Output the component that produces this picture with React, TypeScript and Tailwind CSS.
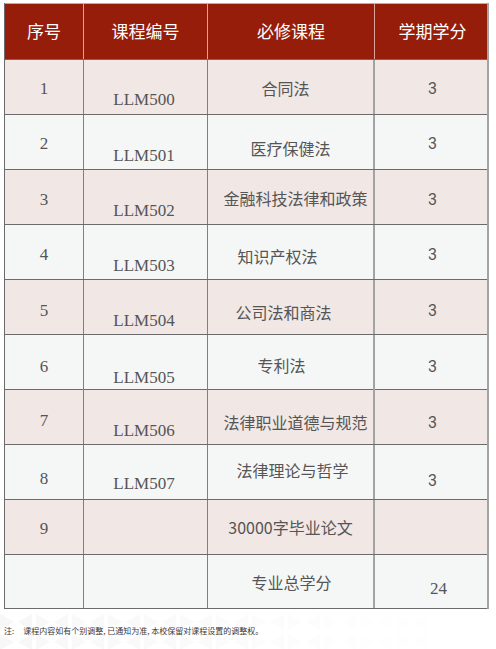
import { type ReactElement } from "react";

interface CourseRow {
  no: string;
  code: string;
  name: string;
  credit: string;
  bg: string;
  noCls: string;
  codeCls: string;
  nameCls: string;
  creditCls: string;
}

const PINK = "bg-[#f1e7e5]";
const GREY = "bg-[#f5f7f7]";

const rows: CourseRow[] = [
  { no: "1", code: "LLM500", name: "合同法", credit: "3", bg: PINK, noCls: "pt-[4px]", codeCls: "pt-[26px]", nameCls: "pt-[2px] pr-[10px]", creditCls: "pt-[4px]" },
  { no: "2", code: "LLM501", name: "医疗保健法", credit: "3", bg: GREY, noCls: "pt-[4px]", codeCls: "pt-[28px]", nameCls: "pt-[12px]", creditCls: "pt-[4px]" },
  { no: "3", code: "LLM502", name: "金融科技法律和政策", credit: "3", bg: PINK, noCls: "pt-[6px]", codeCls: "pt-[28px]", nameCls: "pt-[2px] pl-[10px]", creditCls: "pt-[6px]" },
  { no: "4", code: "LLM503", name: "知识产权法", credit: "3", bg: GREY, noCls: "pt-[6px]", codeCls: "pt-[28px]", nameCls: "pt-[8px] pr-[26px]", creditCls: "pt-[6px]" },
  { no: "5", code: "LLM504", name: "公司法和商法", credit: "3", bg: PINK, noCls: "pt-[8px]", codeCls: "pt-[28px]", nameCls: "pt-[10px] pr-[14px]", creditCls: "pt-[8px]" },
  { no: "6", code: "LLM505", name: "专利法", credit: "3", bg: GREY, noCls: "pt-[8px]", codeCls: "pt-[30px]", nameCls: "pt-[4px] pr-[18px]", creditCls: "pt-[8px]" },
  { no: "7", code: "LLM506", name: "法律职业道德与规范", credit: "3", bg: PINK, noCls: "pt-[8px]", codeCls: "pt-[28px]", nameCls: "pt-[10px] pl-[10px]", creditCls: "pt-[12px]" },
  { no: "8", code: "LLM507", name: "法律理论与哲学", credit: "3", bg: GREY, noCls: "pt-[14px]", codeCls: "pt-[24px]", nameCls: "pb-[4px] pl-[4px]", creditCls: "pt-[18px]" },
  { no: "9", code: "", name: "30000字毕业论文", credit: "", bg: PINK, noCls: "pt-[4px]", codeCls: "", nameCls: "", creditCls: "" },
  { no: "", code: "", name: "专业总学分", credit: "24", bg: GREY, noCls: "", codeCls: "", nameCls: "pl-[2px]", creditCls: "pt-[14px] pl-[12px]" },
];

const cjk = "font-['Noto_Sans_CJK_SC',_'Noto_Sans',_sans-serif]";
const serif = "font-['Liberation_Serif',_'Noto_Sans_CJK_SC',_serif]";
const cols = "grid grid-cols-[79px_124px_167px_115px]";

const Pattern = (): ReactElement => (
  <svg className="absolute inset-0 h-full w-full" viewBox="0 0 496 40" preserveAspectRatio="none">
    {Array.from({ length: 14 }).map((_, i) => {
      const x = i * 36;
      const o = Math.max(0, 0.4 - i * 0.035);
      return (
        <g key={i} fill="#ededed" opacity={o}>
          <polygon points={`${x},2 ${x + 14},10 ${x},18`} />
          <polygon points={`${x + 32},2 ${x + 18},10 ${x + 32},18`} />
          <polygon points={`${x},22 ${x + 14},30 ${x},38`} />
          <polygon points={`${x + 32},22 ${x + 18},30 ${x + 32},38`} />
        </g>
      );
    })}
  </svg>
);

export default function App(): ReactElement {
  return (
    <div className="w-[496px] h-[649px] bg-white overflow-hidden pt-[3px] px-[4px]">
      <div className="w-[485px] border-l border-[#6b6b6b] border-r-2 border-r-[#a3a3a3]">
        <div className={`${cols} h-[56px] bg-[#951d0a] border-t border-[#b0b0b0] text-white text-[17px] ${cjk}`}>
          {["序号", "课程编号", "必修课程", "学期学分"].map((h, i) => (
            <div
              key={h}
              className={`flex items-center justify-center pb-[2px] ${i < 3 ? "border-r border-[#d9a59b]" : ""}`}
            >
              {h}
            </div>
          ))}
        </div>
        {rows.map((r, i) => (
          <div key={i} className={`${cols} h-[55px] ${r.bg} border-t border-[#6b6b6b] ${i === rows.length - 1 ? "border-b" : ""} text-[#555]`}>
            <div className={`flex items-center justify-center border-r border-[#808080] text-[17px] ${serif} ${r.noCls}`}>
              {r.no}
            </div>
            <div className={`flex items-center justify-center border-r border-[#808080] text-[17px] pr-[3px] ${serif} ${r.codeCls}`}>
              {r.code}
            </div>
            <div className={`flex items-center justify-center border-r-2 border-[#a3a3a3] text-[16px] ${cjk} ${r.nameCls}`}>
              {r.name}
            </div>
            <div className={`flex items-center justify-center ${r.credit === "24" ? `text-[17px] ${serif}` : `text-[16px] font-['Roboto',_sans-serif]`} ${r.creditCls}`}>
              {r.credit}
            </div>
          </div>
        ))}
      </div>
      <div className="relative -mx-[4px] mt-[3px] h-[40px]">
        <Pattern />
        <p className={`relative flex items-center h-full pb-[2px] pl-[4px] text-[8px] text-[#3a3a3a] ${cjk}`}>
          <span className="mr-[9px]">注:</span>
          <span>课程内容如有个别调整, 已通知为准, 本校保留对课程设置的调整权。</span>
        </p>
      </div>
    </div>
  );
}
